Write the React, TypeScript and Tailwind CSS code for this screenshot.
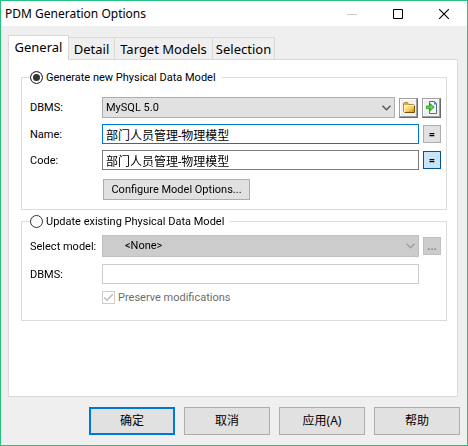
import { useState } from "react";
import type { ReactNode } from "react";

const ui = "font-['Roboto','Noto_Sans_CJK_SC',sans-serif]";
const title = "font-['Noto_Sans','Noto_Sans_CJK_SC',sans-serif]";

function Chevron({ className }: { className: string }) {
  return (
    <svg
      viewBox="0 0 9 6"
      className={`pointer-events-none absolute top-1/2 right-1 h-1.5 w-[9px] -translate-y-1/2 ${className}`}
      fill="none"
      stroke="currentColor"
      strokeWidth="1.4"
      aria-hidden="true"
    >
      <path d="M0.5 0.7 4.5 4.7 8.5 0.7" />
    </svg>
  );
}

function FolderIcon() {
  return (
    <svg viewBox="0 0 12 11" className="h-[11px] w-3" aria-hidden="true">
      <defs>
        <linearGradient id="folder" x1="0" y1="0" x2="1" y2="1">
          <stop offset="0" stopColor="#fff3b0" />
          <stop offset="0.5" stopColor="#f7cf62" />
          <stop offset="1" stopColor="#c98a12" />
        </linearGradient>
      </defs>
      <path d="M0.5 9.5V1.5L1.5 0.5H4.5L5.5 2.5H10.5V9.5Z" fill="#d9aa45" stroke="#b48a3c" />
      <path d="M1.5 10.5V3.5H11.5V10.5Z" fill="url(#folder)" />
      <path d="M1.5 10.5H11.5V3.5" fill="none" stroke="#7a5210" />
      <path d="M1.5 10V3.5H11" fill="none" stroke="#fff2b4" />
    </svg>
  );
}

function ImportIcon() {
  return (
    <svg viewBox="0 0 12 13" className="h-[13px] w-3" aria-hidden="true">
      <path d="M3.5 0.5H8.5L10.5 2.5V12.5H3.5Z" fill="#f4f8fc" stroke="#5d6f86" />
      <path d="M8 0.5V3.5H11Z" fill="#3f86d8" />
      <path
        d="M0.5 5H4.2V2.6L8.2 6.2 4.2 9.8V7.6H0.5Z"
        fill="#62d638"
        stroke="#2c8f16"
        strokeWidth="0.8"
      />
    </svg>
  );
}

function ToolButton({ label, children }: { label: string; children: ReactNode }) {
  return (
    <button
      type="button"
      aria-label={label}
      className="flex h-5 w-[19px] shrink-0 items-center justify-center border border-t-[#a0a0a0] border-r-[#696969] border-b-[#696969] border-l-[#a0a0a0] bg-[#f0f0f0] shadow-[inset_-1px_-1px_0_#a0a0a0,inset_1px_1px_0_#ffffff]"
    >
      {children}
    </button>
  );
}

function Row({ id, label, className, children }: { id: string; label: string; className: string; children: ReactNode }) {
  return (
    <div className={`flex items-center ${className}`}>
      <label htmlFor={id} className="w-[72px] shrink-0 pt-px whitespace-nowrap">
        {label}
      </label>
      <div className="flex min-w-0 flex-1 items-center gap-1">{children}</div>
    </div>
  );
}

const radio =
  "h-[13px] w-[13px] shrink-0 appearance-none rounded-full border border-[#333333] bg-white outline-none checked:bg-[#333333] checked:shadow-[inset_0_0_0_2px_#ffffff]";
const group = "min-w-0 border border-[#dcdcdc] pr-[5px] pl-2";
const legend = "flex h-[17px] items-center gap-[3px] pr-1.5";
const field = "h-5 min-w-0 flex-1 border bg-white px-[3px] text-xs outline-none";
const square = "flex h-[18px] w-[18px] shrink-0 items-center justify-center border font-bold leading-none";
const tab = "h-[22px] border-t border-r border-[#d9d9d9] whitespace-nowrap";
const command = "h-7 w-[86px] bg-[#e1e1e1]";

export default function App() {
  const [mode, setMode] = useState("new");
  const [name, setName] = useState("部门人员管理-物理模型");
  const [code, setCode] = useState("部门人员管理-物理模型");

  return (
    <div className={`flex min-h-screen flex-col border border-[#26c281] bg-[#efefef] text-[11px] leading-4 text-black ${ui}`}>
      <header className={`flex h-[25px] items-center justify-between bg-white pl-1 ${title}`}>
        <h1 className="text-xs">PDM Generation Options</h1>
        <div className="flex">
          <button type="button" aria-label="Minimize" disabled className="flex h-6 w-[46px] items-center justify-center text-[#cccccc]">
            <svg viewBox="0 0 10 10" className="h-2.5 w-2.5" stroke="currentColor"><path d="M0 5.5H10" /></svg>
          </button>
          <button type="button" aria-label="Maximize" className="flex h-6 w-[46px] items-center justify-center">
            <svg viewBox="0 0 10 10" className="h-2.5 w-2.5" fill="none" stroke="currentColor"><path d="M0.5 0.5H9.5V9.5H0.5Z" /></svg>
          </button>
          <button type="button" aria-label="Close" className="flex h-6 w-[46px] items-center justify-center">
            <svg viewBox="0 0 10 10" className="h-2.5 w-2.5" stroke="currentColor" strokeWidth="1.1"><path d="M0 0 10 10M10 0 0 10" /></svg>
          </button>
        </div>
      </header>

      <main className="mr-[9px] ml-[7px] flex flex-1 flex-col pt-[9px]">
        <div role="tablist" className={`flex items-end text-[13px] ${title}`}>
          <button type="button" role="tab" aria-selected="true" className="z-10 -mb-px h-[25px] w-[61px] border-x border-t border-[#d9d9d9] bg-white pb-0.5">
            General
          </button>
          <button type="button" role="tab" aria-selected="false" className={`${tab} w-[46px]`}>Detail</button>
          <button type="button" role="tab" aria-selected="false" className={`${tab} w-[98px]`}>Target Models</button>
          <button type="button" role="tab" aria-selected="false" className={`${tab} w-[62px]`}>Selection</button>
        </div>

        <form className="flex-1 border border-[#d9d9d9] bg-white px-3 pt-[9px] pr-2.5">
          <fieldset className={`${group} pt-[11px] pb-[9px]`}>
            <legend className={legend}>
              <input id="new" type="radio" name="mode" className={radio} checked={mode === "new"} onChange={() => setMode("new")} />
              <label htmlFor="new">Generate new Physical Data Model</label>
            </legend>
            <Row id="dbms" label="DBMS:" className="mb-1.5">
              <div className="relative min-w-0 flex-1">
                <select id="dbms" className="block h-[21px] w-full appearance-none border border-[#adadad] bg-[#e1e1e1] pl-[3px]">
                  <option>MySQL 5.0</option>
                </select>
                <Chevron className="text-[#555555]" />
              </div>
              <ToolButton label="Browse"><FolderIcon /></ToolButton>
              <ToolButton label="Import"><ImportIcon /></ToolButton>
            </Row>
            <Row id="name" label="Name:" className="mb-1.5">
              <input id="name" autoFocus value={name} onChange={(e) => setName(e.target.value)} className={`${field} border-[#0078d7]`} />
              <button type="button" aria-label="Reset name" className={`${square} border-[#adadad] bg-[#e1e1e1]`}>=</button>
            </Row>
            <Row id="code" label="Code:" className="mb-[9px]">
              <input id="code" value={code} onChange={(e) => setCode(e.target.value)} className={`${field} border-[#7a7a7a]`} />
              <button type="button" aria-label="Reset code" className={`${square} border-[#005499] bg-[#cce4f7]`}>=</button>
            </Row>
            <button type="button" className="ml-[73px] block h-[21px] w-[147px] border border-[#adadad] bg-[#e1e1e1]">
              Configure Model Options...
            </button>
          </fieldset>

          <fieldset className={`${group} mt-[3px] pt-[5px] pb-4`}>
            <legend className={legend}>
              <input id="update" type="radio" name="mode" className={radio} checked={mode === "update"} onChange={() => setMode("update")} />
              <label htmlFor="update">Update existing Physical Data Model</label>
            </legend>
            <Row id="model" label="Select model:" className="mb-[7px]">
              <div className="relative min-w-0 flex-1">
                <select id="model" disabled className="block h-[22px] w-full appearance-none border border-[#bfbfbf] bg-[#cccccc] pl-[22px] text-black opacity-100">
                  <option>&lt;None&gt;</option>
                </select>
                <Chevron className="text-[#a0a0a0]" />
              </div>
              <button type="button" disabled aria-label="Choose model" className={`${square} border-[#bfbfbf] bg-[#cccccc] text-[#838383]`}>...</button>
            </Row>
            <Row id="dbms2" label="DBMS:" className="mb-[7px]">
              <input id="dbms2" disabled className={`${field} border-[#cccccc]`} />
              <span className="w-[18px]" />
            </Row>
            <label className="ml-[72px] flex h-[13px] items-center gap-[3px] text-[#6d6d6d]">
              <span className="relative flex">
                <input type="checkbox" checked disabled readOnly className="h-[13px] w-[13px] appearance-none border border-[#cccccc] bg-white" />
                <svg viewBox="0 0 13 13" className="pointer-events-none absolute inset-0 h-[13px] w-[13px]" fill="none" stroke="#bcbcbc" strokeWidth="1.5" aria-hidden="true">
                  <path d="M2.2 6.5 5 9.3 10.8 3.3" />
                </svg>
              </span>
              Preserve modifications
            </label>
          </fieldset>
        </form>
      </main>

      <footer className={`flex justify-end gap-[9px] py-2.5 pr-[7px] text-xs ${title}`}>
        <button type="button" className={`${command} border-2 border-[#0078d7]`}>确定</button>
        <button type="button" className={`${command} border border-[#adadad]`}>取消</button>
        <button type="button" className={`${command} border border-[#adadad]`}>应用(A)</button>
        <button type="button" className={`${command} border border-[#adadad]`}>帮助</button>
      </footer>
    </div>
  );
}
